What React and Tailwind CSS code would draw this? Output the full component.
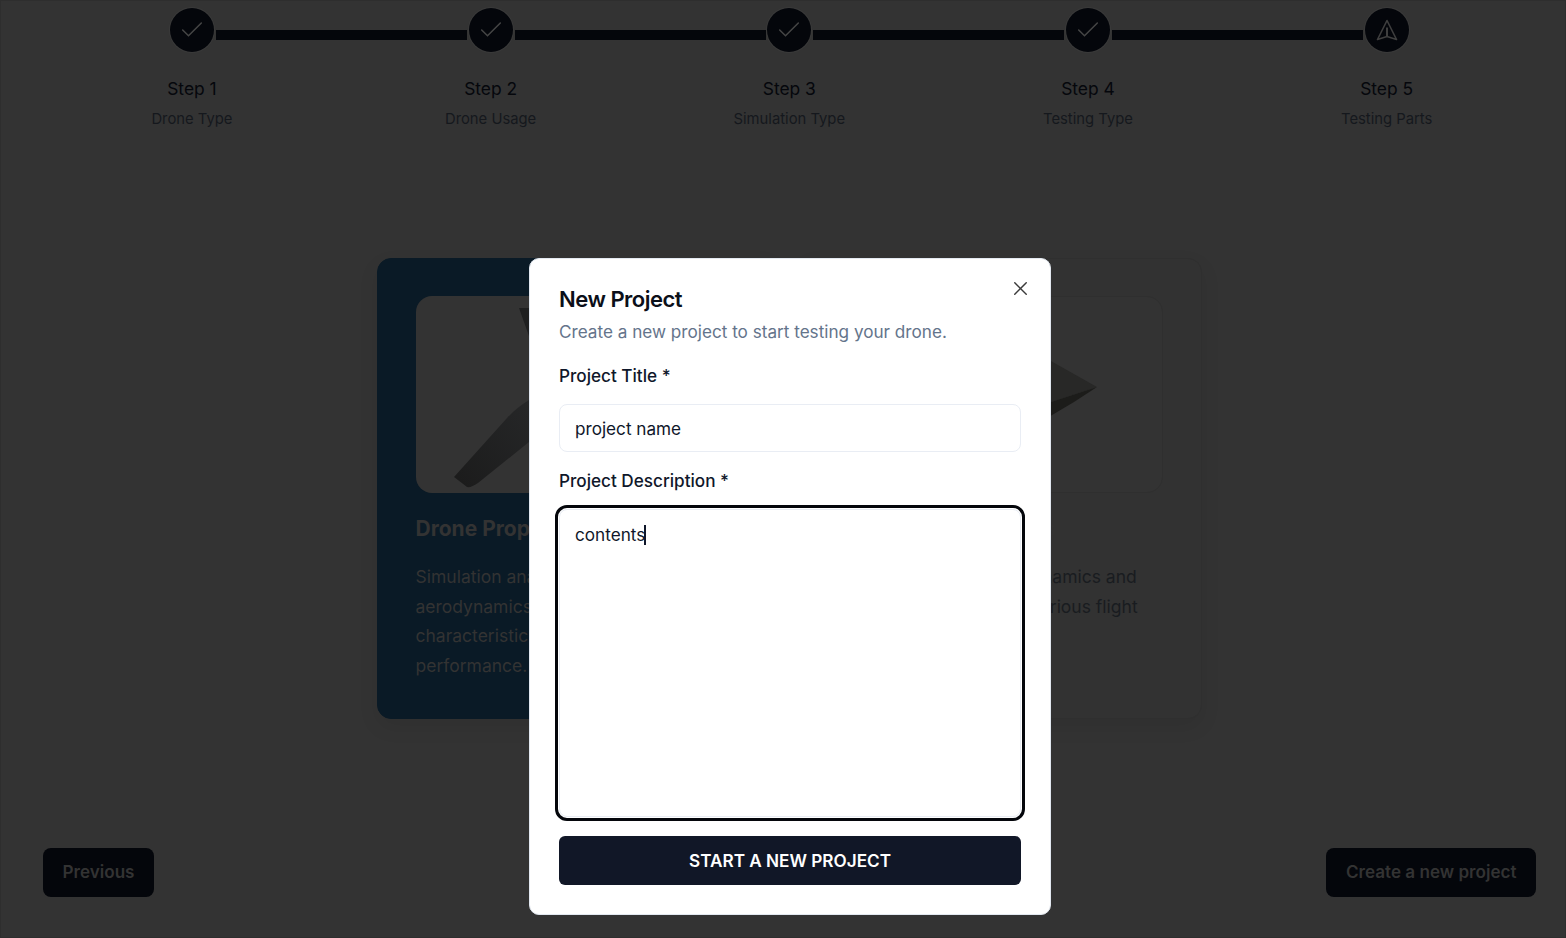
import React from "react";
import { Check, X } from "lucide-react";

const steps = [
  ["Step 1", "Drone Type"],
  ["Step 2", "Drone Usage"],
  ["Step 3", "Simulation Type"],
  ["Step 4", "Testing Type"],
  ["Step 5", "Testing Parts"],
];

function StepIcon({ last }) {
  if (last) {
    return (
      <svg width="24" height="24" viewBox="0 0 24 24" fill="none" stroke="#3f3f3f" strokeWidth="1.6" strokeLinejoin="round">
        <path d="M12 2.5 21.5 21.5 12 18.5 2.5 21.5Z" />
        <path d="M12 9.5v9" strokeWidth="2" />
      </svg>
    );
  }
  return <Check size={28} strokeWidth={1.3} className="text-[#454545]" />;
}

function Step({ title, sub, index }) {
  return (
    <div className="relative flex flex-col items-center">
      {index < 4 && (
        <div className="absolute left-[calc(50%+24px)] top-[30px] h-[10px] w-[251px] bg-[#04060b]" />
      )}
      <div className="relative mt-[8px] flex h-[44px] w-[44px] items-center justify-center rounded-full bg-[#04060b] ring-1 ring-[#3a3a3a]">
        <StepIcon last={index === 4} />
      </div>
      <div className="mt-[27px] text-[17.4px] leading-[20px] text-[#05070c]">{title}</div>
      <div className="mt-[10px] text-[14.8px] leading-[20px] text-[#15181d]">{sub}</div>
    </div>
  );
}

function Card({ selected, lines, title, drone }) {
  return (
    <div
      className={
        "flex h-[461px] w-[400px] flex-col rounded-[14px] px-[38px] pt-[37px] shadow-[0_8px_20px_rgba(0,0,0,0.08)] " +
        (selected ? "border border-[#0a1a26] bg-[#0a1a26]" : "border border-[#2f2f2f] bg-[#323232]")
      }
    >
      <div className={"h-[197px] w-full shrink-0 overflow-hidden rounded-[16px] bg-[#333333] " + (selected ? "" : "border border-[#2f2f2f]")}>
        {drone}
      </div>
      <div className="mt-[22px] whitespace-nowrap text-[21px] font-bold leading-[28px] text-[#333333]">{title}</div>
      <div className={"mt-[19px] whitespace-nowrap text-[17.5px] leading-[29.5px] " + (selected ? "text-[#333333]" : "text-[#191c20]")}>
        {lines.map((l) => (
          <div key={l}>{l}</div>
        ))}
      </div>
    </div>
  );
}

function DroneLeft() {
  return (
    <svg width="322" height="197" viewBox="0 0 322 197" className="block">
      <defs>
        <linearGradient id="blade" x1="0" y1="1" x2="1" y2="0">
          <stop offset="0" stopColor="#1b1b1b" />
          <stop offset="1" stopColor="#262728" />
        </linearGradient>
      </defs>
      <path d="M38 181 91 122Q100 112 113 104L113 146 62 187Q55 192 51 191Z" fill="url(#blade)" />
      <path d="M103 12 113 12 113 40Z" fill="#1e1f20" />
    </svg>
  );
}

function DroneRight() {
  return (
    <svg width="320" height="195" viewBox="0 0 320 195" className="block">
      <path d="M200 59 255 90 200 108Z" fill="#282827" />
      <path d="M200 108 255 90 232 105 200 124Z" fill="#1c1c1a" />
    </svg>
  );
}

export default function App() {
  return (
    <div className="relative h-[938px] w-[1566px] overflow-hidden bg-[#333333] font-['Inter',sans-serif] shadow-[inset_0_0_0_1px_#2e2e2e]">
      <div className="grid grid-cols-5 pl-[42.6px] pr-[30px]">
        {steps.map(([t, s], i) => (
          <Step key={t} title={t} sub={s} index={i} />
        ))}
      </div>

      <div className="mt-[129px] flex justify-center gap-[25px] pl-[12px]">
        <Card
          selected
          title="Drone Propeller"
          drone={<DroneLeft />}
          lines={["Simulation analysis of propeller", "aerodynamics and structural", "characteristics for optimized", "performance."]}
        />
        <Card
          title="Drone Aerodynamics"
          drone={<DroneRight />}
          lines={["Simulation of the aerodynamics and", "overall behavior under various flight"]}
        />
      </div>

      <div className="mt-[129px] flex justify-between pl-[43px] pr-[30px]">
        <button className="h-[49px] rounded-[8px] bg-[#04060b] px-[19.5px] pb-[2px] text-[17.1px] font-semibold text-[#333333]">Previous</button>
        <button className="h-[49px] rounded-[8px] bg-[#04060b] px-[19.5px] pb-[2px] text-[17.1px] font-semibold text-[#333333]">Create a new project</button>
      </div>

      <div className="absolute left-[529px] top-[258px] flex h-[657px] w-[522px] flex-col rounded-[10px] border border-[#e2e8f0] bg-white px-[29px] pt-[25px]">
        <button className="absolute right-[18px] top-[17.5px] text-[#3b3b3b]">
          <X size={23} strokeWidth={1.5} />
        </button>
        <h2 className="text-[22px] font-semibold leading-[30px] tracking-[-0.5px] text-[#0b0f19]">New Project</h2>
        <p className="mt-[6px] text-[17.15px] leading-[24px] text-[#64748b]">Create a new project to start testing your drone.</p>
        <label className="mt-[20px] text-[17.15px] font-medium leading-[24px] text-[#0f172a]">Project Title *</label>
        <div className="mt-[16px] flex h-[48px] items-center rounded-[8px] border border-[#e9edf4] px-[15px] pt-[2px] text-[17.15px] text-[#0f172a]">project name</div>
        <label className="mt-[17px] text-[17.15px] font-medium leading-[24px] text-[#0f172a]">Project Description *</label>
        <div className="mt-[16px] h-[308px] rounded-[8px] border border-[#e9edf4] px-[15px] py-[11px] text-[17.15px] leading-[26px] text-[#0f172a] outline-[3px] outline-offset-[1.5px] outline-[#04060b] outline-solid">
          contents<span className="ml-[-1px] inline-block h-[20px] w-[1.5px] translate-y-[4px] bg-[#0f172a]" />
        </div>
        <button className="mt-[19px] h-[49px] rounded-[6px] bg-[#111727] text-[17.15px] font-semibold text-white">START A NEW PROJECT</button>
      </div>
    </div>
  );
}
